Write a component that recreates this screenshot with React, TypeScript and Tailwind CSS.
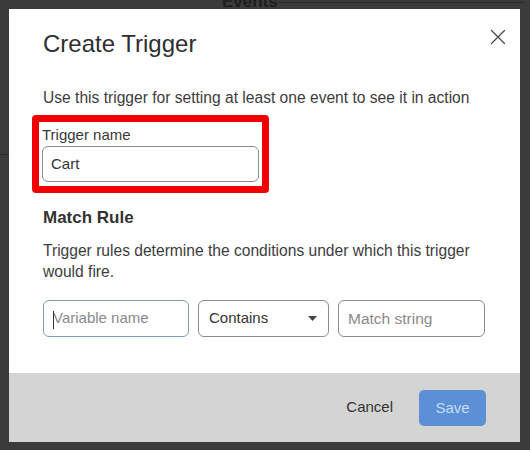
import { X } from 'lucide-react';

const font = { fontFamily: '"Liberation Sans", Arial, sans-serif' };

const App = () => {
  return (
    <div
      className="relative w-[530px] h-[450px] overflow-hidden bg-[#3b3b3b] pl-[9px] pt-[9px]"
      style={font}
    >
      {/* dimmed page behind the dialog */}
      <div className="absolute left-[222px] top-[-8px] text-[17px] font-bold leading-[20px] text-[#1e1e1e]">Events</div>
      <div className="absolute left-[275px] top-[2px] h-px w-[250px] bg-[#2a2a2a]" />
      <div className="absolute left-0 top-[154px] h-px w-[9px] bg-[#2a2a2a]" />

      {/* Dialog */}
      <div className="relative flex h-[433px] w-[511px] flex-col bg-white text-[#333]">
        <div className="flex-1 px-[34px] pt-[20px]">
          <div className="flex items-start justify-between">
            <h1 className="text-[24px] leading-[30px] text-[#2f2f2f]">Create Trigger</h1>
            <button className="mr-[-25px] mt-[-5px] text-[#444]">
              <X className="h-[26px] w-[26px]" strokeWidth={1.1} />
            </button>
          </div>

          <p className="mt-[28px] text-[15.6px] leading-[22px] text-[#3d3d3d]">
            Use this trigger for setting at least one event to see it in action
          </p>

          {/* highlighted field */}
          <div className="-ml-[11px] mt-[6px] w-[237px] rounded-[4px] border-[7px] border-[#f20000] px-[3px] pb-[4px] pt-[4px]">
            <label className="block text-[15px] leading-[18px] text-[#3a3a3a]">Trigger name</label>
            <div className="mt-[2px] flex h-[36px] items-center rounded-md border border-[#8c8c8c] pl-[8px] text-[15px] text-[#333]">
              Cart
            </div>
          </div>

          <h2 className="mt-[14px] text-[17px] font-bold leading-[22px] text-[#333]">Match Rule</h2>
          <p className="mt-[11px] text-[15.6px] leading-[21px] text-[#3d3d3d]">
            Trigger rules determine the conditions under which this trigger would fire.
          </p>

          <div className="mt-[18px] flex h-[37px] gap-[9px]">
            <div className="relative flex w-[146px] items-center rounded-md border border-[#7f9fc4] pl-[9px] text-[15px] text-[#8a8a8a]">
              <span className="absolute left-[9px] top-[10px] h-[18px] w-px bg-[#333]" />
              Variable name
            </div>
            <div className="flex w-[131px] items-center justify-between rounded-md border border-[#8c8c8c] pl-[10px] pr-[11px] text-[15px] text-[#333]">
              Contains
              <svg width="9" height="5" viewBox="0 0 9 5">
                <path d="M0 0h9L4.5 5z" fill="#444" />
              </svg>
            </div>
            <div className="flex w-[147px] items-center rounded-md border border-[#8c8c8c] pl-[9px] text-[15.5px] text-[#8a8a8a]">
              Match string
            </div>
          </div>
        </div>

        {/* Footer */}
        <div className="flex h-[69px] items-center justify-end gap-[26px] bg-[#d4d4d4] pr-[34px]">
          <button className="text-[15px] text-[#333]">Cancel</button>
          <button className="mt-[1px] h-[36px] w-[67px] rounded-[5px] bg-[#5b8fd6] text-[15px] text-[#c9dcf3]">
            Save
          </button>
        </div>
      </div>
    </div>
  );
};

export default App;
